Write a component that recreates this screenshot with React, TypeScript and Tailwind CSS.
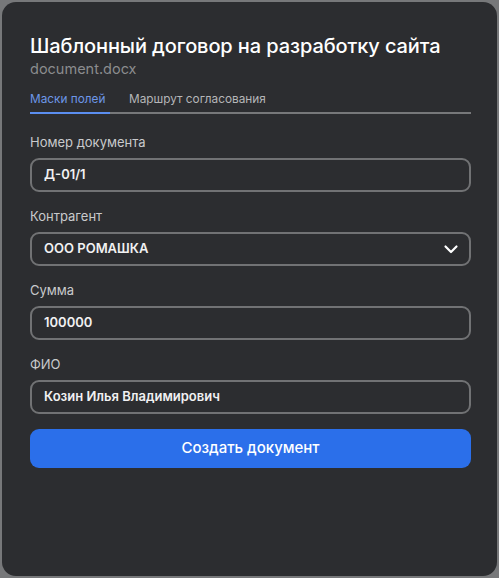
import React from "react";

function Field({ label, value }: { label: string; value: string }) {
  return (
    <div className="flex flex-col">
      <div className="text-[13px] leading-[18px] text-[#c9cacc] mb-[7px]">{label}</div>
      <div className="h-[34px] rounded-[9px] border-2 border-[#717274] flex items-center px-[12px] text-[13px] font-semibold text-[#f1f1f2]">
        {value}
      </div>
    </div>
  );
}

export default function App() {
  return (
    <div className="w-[499px] h-[578px] bg-[#77787a] p-[2px]" style={{ fontFamily: "Inter, 'Noto Sans', sans-serif" }}>
      <div className="w-full h-full rounded-[14px] bg-[#2c2d30] pl-[28px] pr-[26px] pt-[31px] flex flex-col">
        <div className="text-[20px] leading-[26px] text-white font-medium tracking-[-0.1px] whitespace-nowrap">
          Шаблонный договор на разработку сайта
        </div>
        <div className="text-[14.5px] leading-[20px] text-[#8b8c8e]">document.docx</div>
        <div className="mt-[11px] flex border-b-2 border-[#77787a] whitespace-nowrap">
          <div className="text-[11.8px] leading-[18px] text-[#6d97e8] pb-[4px] border-b-2 border-[#5b8ef0] -mb-[2px] w-[80px]">
            Маски полей
          </div>
          <div className="text-[11.8px] leading-[18px] text-[#b5b6b8] ml-[19px] pb-[4px]">Маршрут согласования</div>
        </div>
        <div className="mt-[19px] flex flex-col gap-[15px]">
          <Field label="Номер документа" value="Д-01/1" />
          <div className="flex flex-col">
            <div className="text-[13px] leading-[18px] text-[#c9cacc] mb-[7px]">Контрагент</div>
            <div className="h-[34px] rounded-[9px] border-2 border-[#717274] flex items-center justify-between pl-[12px] pr-[10px] text-[13px] font-semibold text-[#f1f1f2]">
              <span>ООО РОМАШКА</span>
              <svg width="16" height="16" viewBox="0 0 16 16" fill="none">
                <path d="M2.5 5.5 L8 11 L13.5 5.5" stroke="white" strokeWidth="2.2" strokeLinecap="round" strokeLinejoin="round" />
              </svg>
            </div>
          </div>
          <Field label="Сумма" value="100000" />
          <Field label="ФИО" value="Козин Илья Владимирович" />
        </div>
        <button className="mt-[15px] h-[39px] rounded-[9px] bg-[#2b6fea] text-white text-[15px] font-medium">
          Создать документ
        </button>
      </div>
    </div>
  );
}
